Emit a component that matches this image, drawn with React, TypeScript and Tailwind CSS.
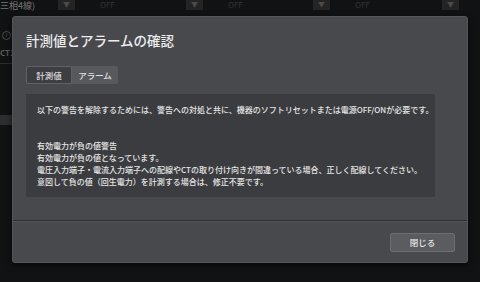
import React from "react";

const DropArrow = () => (
  <div className="flex h-[10px] w-[17px] items-start justify-center bg-[#242424] pt-[1px]">
    <span className="text-[7px] leading-none text-[#4a4a4a]">▼</span>
  </div>
);

const Background = () => (
  <div className="flex h-full w-full flex-col bg-[#111213] font-['Noto_Sans_CJK_JP',sans-serif]">
    <div className="flex h-[10px] items-center">
      <span className="w-[58px] text-[9px] leading-none text-[#777777]">三相4線)</span>
      <DropArrow />
      <span className="ml-[25px] w-[86px] text-[8px] leading-none text-[#333333]">OFF</span>
      <DropArrow />
      <span className="ml-[25px] w-[85px] text-[8px] leading-none text-[#333333]">OFF</span>
      <DropArrow />
      <span className="ml-[25px] w-[87px] text-[8px] leading-none text-[#333333]">OFF</span>
      <DropArrow />
    </div>
    <div className="mt-[20px] flex h-[10px] items-center pl-[2px]">
      <span className="flex h-[9px] w-[9px] items-center justify-center rounded-full border border-[#4a4a4a] text-[6px] leading-none text-[#4a4a4a]">i</span>
    </div>
    <div className="mt-[8px] h-[10px] text-[8px] font-bold leading-[10px] text-[#5a5a5a]">CT1</div>
    <div className="mt-[5px] h-px w-[12px] bg-[#2c2c2c]" />
    <div className="mt-[51px] h-[10px] w-[12px] bg-[#2e2e2f]" />
  </div>
);

const Modal = () => (
  <div className="absolute left-[12px] top-[16px] flex h-[247px] w-[456px] flex-col rounded-[3px] border border-[#55565a] bg-[#48494d] font-['Noto_Sans_CJK_JP',sans-serif] shadow-[0_2px_6px_rgba(0,0,0,0.6)]">
    <div className="flex flex-1 flex-col px-[13px] pt-[13px]">
      <h1 className="text-[13.5px] font-medium leading-[20px] text-[#ededed]">計測値とアラームの確認</h1>
      <div className="mt-[16px] flex h-[18px]">
        <div className="flex w-[46px] items-center justify-center rounded-l-[2px] border border-[#606165] bg-[#3d3e41] text-[8.5px] font-medium leading-none text-[#d8d8d8]">
          計測値
        </div>
        <div className="flex w-[46px] items-center justify-center rounded-r-[2px] bg-[#58595d] text-[8.5px] font-medium leading-none text-[#e2e2e2]">
          アラーム
        </div>
      </div>
      <div className="mt-[10px] h-[103px] w-[409px] whitespace-nowrap bg-[#3b3c3f] pl-[11px] pt-[10px] text-[8px] font-medium leading-[12px] text-[#e6e6e6]">
        <p>以下の警告を解除するためには、警告への対処と共に、機器のソフトリセットまたは電源OFF/ONが必要です。</p>
        <div className="mt-[24px]">
          <p>有効電力が負の値警告</p>
          <p>有効電力が負の値となっています。</p>
          <p>電圧入力端子・電流入力端子への配線やCTの取り付け向きが間違っている場合、正しく配線してください。</p>
          <p>意図して負の値（回生電力）を計測する場合は、修正不要です。</p>
        </div>
      </div>
    </div>
    <div className="h-px bg-[#2e2f32]" />
    <div className="flex h-[41px] items-center justify-end border-t border-[#55565a] pr-[12px]">
      <button className="flex h-[19px] w-[65px] items-center justify-center rounded-[2px] border border-[#6c6d71] bg-[#5b5c60] text-[8.5px] font-medium leading-none text-[#e6e6e6]">
        閉じる
      </button>
    </div>
  </div>
);

export default function App() {
  return (
    <div className="relative h-[282px] w-[480px] overflow-hidden">
      <Background />
      <Modal />
    </div>
  );
}
